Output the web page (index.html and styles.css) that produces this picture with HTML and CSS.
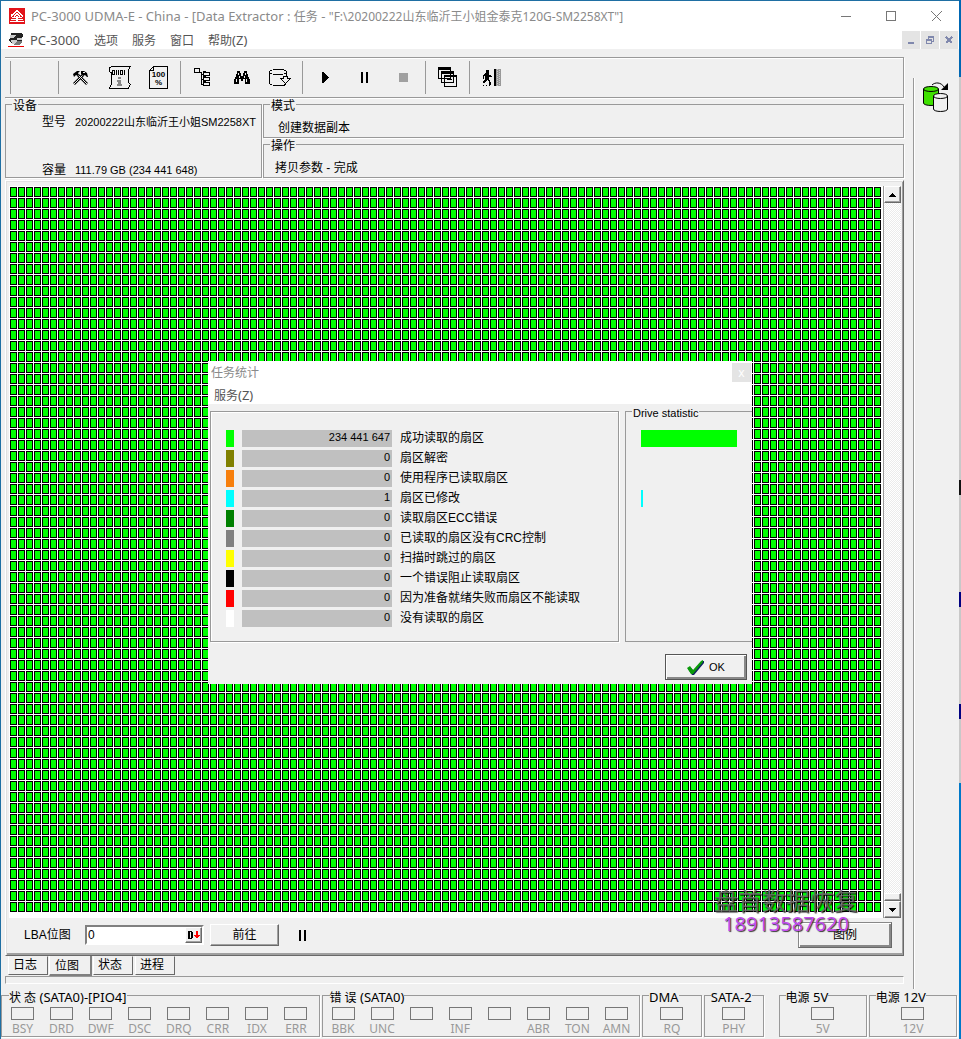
FILE: index.html
```html
<!DOCTYPE html>
<html lang="zh-CN">
<head>
    <meta charset="UTF-8">
    <meta name="viewport" content="width=device-width, initial-scale=1.0">
    <title>PC-3000 UDMA-E</title>
    <link rel="stylesheet" href="styles.css">
</head>
<body>
    <div class="window">
        <header class="titlebar">
            <svg class="app-icon" width="16" height="16" viewBox="0 0 16 16"><path fill="#e2141b" d="M0 0h16v16H0z"/><path d="M2 8l6-5.500 6 5.500M5 8.500l3-3 3 3" fill="none" stroke="#fff" stroke-width="1.500"/><path fill="#fff" d="M3 9h10v1H3zM2 11h12v1H2zM1 13h14v1H1zM7 8h2v6H7z"/></svg>
            <h1>PC-3000 UDMA-E - China - [Data Extractor : <span class="zh">任务</span> - <span class="zh">"F:\20200222山东临沂王小姐金泰克120G-SM2258XT"]</span></h1>
            <div class="window-buttons">
                <button aria-label="最小化"><svg width="11" height="11"><path d="M0 5.500h10" stroke="#777"/></svg></button>
                <button aria-label="最大化"><svg width="11" height="11"><path d="M.5.500h9v9h-9z" fill="none" stroke="#777"/></svg></button>
                <button aria-label="关闭"><svg width="11" height="11"><path d="M.5.500l10 10M10.500.500l-10 10" stroke="#777"/></svg></button>
            </div>
        </header>
        <nav class="menubar">
            <svg class="app-icon" width="16" height="16" viewBox="0 0 16 16"><path fill="#222" d="M3 1h10l2 2-1 5-3 3H3L1 9l1-3z"/><path fill="#ccc" d="M2 3h6L6 6H2zM9 6h5v2H9zM3 8h5l3 2-2 2H4z"/><path fill="#777" d="M9 9h5v2l-3 2H6z"/><path fill="#e00" d="M0 14h16v1H0z"/></svg>
            <a href="#">PC-3000</a>
            <a href="#"><span class="zh">选项</span></a>
            <a href="#"><span class="zh">服务</span></a>
            <a href="#"><span class="zh">窗口</span></a>
            <a href="#"><span class="zh">帮助</span>(Z)</a>
            <div class="mdi-buttons">
                <button aria-label="最小化子窗口"><svg width="8" height="8"><path fill="#8088ad" d="M1 6h6v2H1z"/></svg></button>
                <button aria-label="还原子窗口"><svg width="8" height="8"><path fill="#8088ad" fill-rule="evenodd" d="M2 0h6v6H6V5h1V2H3v1H2zM0 3h6v5H0zm1 2v2h4V5z"/></svg></button>
                <button aria-label="关闭子窗口"><svg width="8" height="8"><path d="M1 1l6 6M7 1L1 7" stroke="#8088ad" stroke-width="2"/></svg></button>
            </div>
        </nav>

        <div class="workspace">
            <main class="task">
                <div class="toolbar">
                    <div class="tool-group tool-group-empty"></div>
                    <div class="tool-group">
                        <button aria-label="工具"><svg class="smooth" width="17" height="17" viewBox="0 0 17 17"><path d="M2 15l9-9M15 15L6 6" fill="none" stroke="#000" stroke-width="2.600"/><path d="M2 15l9-9M15 15L6 6" stroke="#f0f0f0"/><path d="M1 5l4-3h3L6 4l1 2-1 1-2-1-2 2zM9 2h3l3 2 1 4h-1l-2-2-2 1-2-2z"/><path fill="#f0f0f0" d="M11 3h2v1h-2z"/></svg></button>
                        <button aria-label="信息"><svg width="24" height="23" viewBox="0 0 24 23"><path d="M4 .5h18.500l-2 3v13l2 2-2 3.500H1.500l2-4V7L1 5V2z" fill="#f0f0f0" stroke="#000"/><g fill="none" stroke="#000"><path d="M4.500 4.500h2v4h-2zM8.500 4v5M10.500 4v5M12.500 4.500h2v4h-2zM16.500 4v5"/></g><path fill="#888" d="M10 11h3v2h-3zM9 14h4v4h1v2H9v-2h1v-2H9z"/></svg></button>
                        <button aria-label="进度"><svg width="20" height="23" viewBox="0 0 20 23"><path d="M4.500.500h14v22H.5v-18zv4h-4" fill="#f0f0f0" stroke="#000"/><text x="9.500" y="11" text-anchor="middle" class="icon-text">100</text><text x="9.500" y="19" text-anchor="middle" class="icon-text">%</text></svg></button>
                    </div>
                    <div class="tool-group">
                        <button aria-label="目录树"><svg width="17" height="19" viewBox="0 0 17 19"><path d="M.5.500h5v4h-5zM9.500 4.500h6v3h-6zM9.500 9.500h6v3h-6zM9.500 14.500h6v3h-6zM4 4.500h3V16h2M7 6h2M7 11h2" fill="none" stroke="#000"/><path d="M9 3h3v1H9zM9 8h3v1H9zM9 13h3v1H9zM15 4h1v4h-1z"/></svg></button>
                        <button aria-label="查找"><svg width="16" height="14" viewBox="0 0 16 14"><path d="M3 0h3v2h1v3h2V2h1V0h3v3h1v3h1v2h1v5h-5V8H9v2H7V8H5v5H0V8h1V6h1V3h1z"/><path fill="#f0f0f0" d="M4 2h1v2H4zM11 2h1v2h-1zM2 8h1v3H2zM12 8h1v3h-1zM5 5h1v2H5zM10 5h1v2h-1z"/></svg></button>
                        <button aria-label="磁盘"><svg width="23" height="18" viewBox="0 0 23 18"><path d="M.5 3c0-3.300 17-3.300 17 0s-17 3.300-17 0v11c0 3 14 3.500 16 1.500M17.500 3v6" fill="none" stroke="#000"/><path d="M11.500 9.500h3v-2h4v2h3l-5 5z" fill="#f0f0f0" stroke="#000"/></svg></button>
                    </div>
                    <div class="tool-group playback">
                        <button aria-label="开始"><svg width="7" height="11"><path d="M0 0h1l6 5v1l-6 5H0z"/></svg></button>
                        <button aria-label="暂停"><svg width="8" height="11"><path d="M0 0h2v11H0zM5 0h2v11H5z"/></svg></button>
                        <button aria-label="停止"><svg width="9" height="9"><path fill="#a0a0a0" d="M0 0h9v9H0z"/></svg></button>
                    </div>
                    <div class="tool-group">
                        <button aria-label="窗口列表"><svg width="20" height="21" viewBox="0 0 20 21"><path d="M.5.500h12v11H.5zM3.500 4.500h12v11h-12zM6.500 8.500h12v11h-12z" fill="#f0f0f0" stroke="#000"/><path d="M1 1h12v2H1zM4 5h12v2H4zM7 9h12v1H7zM9 12h5v1H9zM9 15h7v1H9z"/></svg></button>
                    </div>
                    <div class="tool-group">
                        <button aria-label="退出"><svg width="19" height="18" viewBox="0 0 19 18"><path d="M4 1h3v3H4zM3 4h4v2h2v1h1v1H7v3h1v2h1v3H7v-3l-2-2-2 3H1v-1l2-3V7H2v3H1V6zM12 0h2v17h-2zM1 16h1v1H1zM4 16h1v1H4zM7 16h1v1H7z"/><path fill="#999" d="M14 0h5v17h-5z"/><path d="M15.500 0v17M17.500 1v16" stroke="#ccc" stroke-dasharray="1 1"/></svg></button>
                    </div>
                </div>

                <div class="info">
                    <fieldset class="device">
                        <legend>设备</legend>
                        <dl>
                            <dt>型号</dt>
                            <dd>20200222山东临沂王小姐SM2258XT</dd>
                            <dt>容量</dt>
                            <dd>111.79 GB (234 441 648)</dd>
                        </dl>
                    </fieldset>
                    <div class="modes">
                        <fieldset>
                            <legend>模式</legend>
                            <p class="mode-text">创建数据副本</p>
                        </fieldset>
                        <fieldset>
                            <legend>操作</legend>
                            <p>拷贝参数 - 完成</p>
                        </fieldset>
                    </div>
                </div>

                <section class="panel">
                    <div class="map">
                        <div class="sectors"></div>
                        <div class="scrollbar">
                            <button class="raised" aria-label="向上"><svg width="7" height="4"><path d="M3 0h1v1h1v1h1v1h1v1H0V3h1V2h1V1h1z"/></svg></button>
                            <div class="track"></div>
                            <div class="thumb raised"></div>
                            <button class="raised" aria-label="向下"><svg width="7" height="4"><path d="M0 0h7v1H6v1H5v1H4v1H3V3H2V2H1V1H0z"/></svg></button>
                        </div>
                    </div>
                    <div class="lba-bar">
                        <label for="lba">LBA位图</label>
                        <div class="lba-box">
                            <input type="text" id="lba" value="0">
                            <button class="raised" aria-label="十进制"><svg width="12" height="8"><path fill-rule="evenodd" d="M0 0h4v1h1v6H4v1H0zm2 1v6h1V1z"/><path fill="#f00" d="M8 0h2v4h2v1h-1v1h-1v1H8V6H7V5H6V4h2z"/></svg></button>
                        </div>
                        <button class="raised go">前往</button>
                        <button class="pause" aria-label="暂停位图"><svg width="8" height="11"><path d="M0 0h2v11H0zM5 0h2v11H5z"/></svg></button>
                        <button class="raised legend-button">图例</button>
                    </div>
                </section>

                <div class="tabs">
                    <button>日志</button>
                    <button class="active">位图</button>
                    <button>状态</button>
                    <button>进程</button>
                </div>
                <div class="progress-line"></div>
            </main>
            <aside class="sidebar">
                <button aria-label="数据副本"><svg class="smooth" width="26" height="31" viewBox="0 0 26 31"><path d="M.5 7c0-3.300 15-3.300 15 0v14c0 3.300-15 3.300-15 0z" fill="#3fe000" stroke="#000"/><path d="M.5 7c0 3.300 15 3.300 15 0" fill="none" stroke="#000"/><path d="M10.500 14c0-3.300 14-3.300 14 0v13c0 3.300-14 3.300-14 0z" fill="#f0f0f0" stroke="#000"/><path d="M10.500 14c0 3.300 14 3.300 14 0M9 3c3-3 9-3 12 2" fill="none" stroke="#000"/><path d="M25 1v7h-7z"/></svg></button>
            </aside>
        </div>

        <footer class="status">
            <fieldset class="wide">
                <legend><span class="zh">状 态</span> (SATA0)-[PIO4]</legend>
                <span class="led">BSY</span>
                <span class="led">DRD</span>
                <span class="led">DWF</span>
                <span class="led">DSC</span>
                <span class="led">DRQ</span>
                <span class="led">CRR</span>
                <span class="led">IDX</span>
                <span class="led">ERR</span>
            </fieldset>
            <fieldset class="wide">
                <legend><span class="zh">错 误</span> (SATA0)</legend>
                <span class="led">BBK</span>
                <span class="led">UNC</span>
                <span class="led"></span>
                <span class="led">INF</span>
                <span class="led"></span>
                <span class="led">ABR</span>
                <span class="led">TON</span>
                <span class="led">AMN</span>
            </fieldset>
            <fieldset class="small">
                <legend>DMA</legend>
                <span class="led">RQ</span>
            </fieldset>
            <fieldset class="small">
                <legend>SATA-2</legend>
                <span class="led">PHY</span>
            </fieldset>
            <fieldset class="power power-first">
                <legend><span class="zh">电源</span> 5V</legend>
                <span class="led">5V</span>
            </fieldset>
            <fieldset class="power">
                <legend><span class="zh">电源</span> 12V</legend>
                <span class="led">12V</span>
            </fieldset>
        </footer>

        <div class="dialog" role="dialog" aria-labelledby="dialog-title">
            <div class="dialog-title">
                <h2 id="dialog-title">任务统计</h2>
                <button aria-label="关闭统计">x</button>
            </div>
            <nav class="dialog-menu"><a href="#"><span class="zh">服务</span>(Z)</a></nav>
            <div class="dialog-body">
                <div class="stats">
                    <table>
                        <tr><td><i class="swatch read"></i></td><td><b>234 441 647</b></td><th scope="row">成功读取的扇区</th></tr>
                        <tr><td><i class="swatch decoded"></i></td><td><b>0</b></td><th scope="row">扇区解密</th></tr>
                        <tr><td><i class="swatch program"></i></td><td><b>0</b></td><th scope="row">使用程序已读取扇区</th></tr>
                        <tr><td><i class="swatch changed"></i></td><td><b>1</b></td><th scope="row">扇区已修改</th></tr>
                        <tr><td><i class="swatch ecc"></i></td><td><b>0</b></td><th scope="row">读取扇区ECC错误</th></tr>
                        <tr><td><i class="swatch crc"></i></td><td><b>0</b></td><th scope="row">已读取的扇区没有CRC控制</th></tr>
                        <tr><td><i class="swatch skipped"></i></td><td><b>0</b></td><th scope="row">扫描时跳过的扇区</th></tr>
                        <tr><td><i class="swatch blocked"></i></td><td><b>0</b></td><th scope="row">一个错误阻止读取扇区</th></tr>
                        <tr><td><i class="swatch not-ready"></i></td><td><b>0</b></td><th scope="row">因为准备就绪失败而扇区不能读取</th></tr>
                        <tr><td><i class="swatch unread"></i></td><td><b>0</b></td><th scope="row">没有读取的扇区</th></tr>
                    </table>
                </div>
                <fieldset class="drive">
                    <legend>Drive statistic</legend>
                    <div class="bars">
                        <span class="bar read" style="width: 100%"></span>
                        <span></span>
                        <span></span>
                        <span class="bar changed" style="width: 2%"></span>
                    </div>
                </fieldset>
            </div>
            <div class="dialog-footer">
                <button class="raised ok">
                    <svg class="smooth" width="17" height="15" viewBox="0 0 17 15"><path fill="#102060" d="M1 9l3-1 3 3 8-10h2v2L7 15H5z"/><path fill="#0a9a0a" d="M0 8l3-2 3 4 8-9 2-1v2L6 14H4z"/></svg>
                    OK
                </button>
            </div>
        </div>

        <div class="watermark">
            <span>盘首数据恢复</span>
            <strong>18913587620</strong>
        </div>
    </div>
</body>
</html>
```
FILE: styles.css
```css
* {
    box-sizing: border-box;
}
body {
    margin: 0;
    padding-right: 2px;
    height: 100vh;
    min-height: 760px;
    font-family: "Liberation Sans", "Noto Sans CJK SC", sans-serif;
    font-size: 12px;
    line-height: 13px;
    color: #000;
    background: linear-gradient(#0067b3 77px, #c8c8c8 77px 480px, #111 480px 495px, #c8c8c8 495px 592px, #000080 592px 607px, #c8c8c8 607px 704px, #000080 704px 719px, #c8c8c8 719px 783px, #0078c8 783px);
}
h1, h2, p, dl, dd {
    margin: 0;
    font-size: 12px;
    font-weight: normal;
}
button {
    display: flex;
    align-items: center;
    justify-content: center;
    padding: 0;
    border: none;
    background: none;
    font: inherit;
    color: inherit;
}
svg {
    display: block;
    shape-rendering: crispEdges;
}
a {
    color: inherit;
    text-decoration: none;
}
fieldset {
    margin: 0;
    padding: 0;
    min-width: 0;
    border: 1px solid #999;
    box-shadow: 1px 1px #fff;
}
legend {
    padding: 0 1px;
    margin-left: 6px;
    height: 13px;
    line-height: 17px;
    white-space: nowrap;
}
.zh {
    font-size: 12px;
}
.smooth {
    shape-rendering: auto;
}
.icon-text {
    font-size: 8px;
    font-weight: bold;
}
.raised {
    background: #f0f0f0;
    border: 1px solid;
    border-color: #fff #696969 #696969 #fff;
    box-shadow: inset -1px -1px #a0a0a0;
}
.window {
    position: relative;
    display: flex;
    flex-direction: column;
    height: 100%;
    border: 1px solid #1f6fa3;
    border-width: 1px 0 0 1px;
    background: #f0f0f0;
}

/* title and menu */
.titlebar, .menubar {
    display: flex;
    align-items: center;
    background: #fff;
    font-family: "Noto Sans", "Noto Sans CJK SC", sans-serif;
    font-size: 13px;
    white-space: nowrap;
}
.titlebar {
    height: 30px;
    padding-left: 8px;
    color: #8a8a8a;
}
.titlebar h1 {
    font-size: 13px;
}
.app-icon {
    margin-right: 6px;
}
.window-buttons {
    display: flex;
    margin-left: auto;
}
.window-buttons button {
    width: 45px;
    height: 28px;
}
.menubar {
    height: 18px;
    padding-left: 7px;
    color: #555;
}
.menubar a {
    margin-right: 14px;
}
.mdi-buttons {
    display: flex;
    gap: 1px;
    margin: 0 1px 0 auto;
}
.mdi-buttons button {
    width: 18px;
    height: 18px;
    background: #e4e4e4;
}
.workspace {
    flex: 1;
    display: flex;
    min-height: 0;
}
.task {
    flex: 1;
    min-width: 0;
    display: flex;
    flex-direction: column;
    padding: 8px 9px 0 4px;
}

/* toolbar */
.toolbar {
    display: flex;
    height: 41px;
    padding: 3px 5px;
    border: 1px solid #999;
    border-left: none;
    box-shadow: inset 0 1px #fff, 1px 1px #fff;
}
.tool-group {
    display: flex;
    padding: 0 2px;
    border-left: 1px solid #999;
}
.tool-group-empty {
    width: 48px;
}
.tool-group button {
    width: 39px;
}
.playback {
    padding-left: 3px;
}

/* device info */
.info {
    display: flex;
    gap: 1px;
}
.device {
    width: 257px;
}
.device dl {
    display: grid;
    grid-template-columns: 27px 1fr;
    gap: 35px 6px;
    padding: 5px 0 0 36px;
    white-space: nowrap;
}
.device dd {
    font-size: 11px;
}
.modes {
    flex: 1;
    min-width: 0;
}
.modes fieldset {
    height: 40px;
}
.modes p {
    padding: 11px 11px 0;
}
.modes .mode-text {
    padding-left: 14px;
}

/* sector map */
.panel {
    flex: 1;
    min-height: 0;
    display: flex;
    flex-direction: column;
    margin-top: 2px;
    padding: 5px 2px 3px 3px;
    border: 1px solid;
    border-color: #fff #696969 #696969 #fff;
    box-shadow: inset 1px 1px #e0e0e0, inset -1px -2px #a0a0a0;
}
.map {
    flex: 1;
    min-height: 0;
    display: flex;
    background: #fff;
}
.sectors {
    flex: 1;
    margin: 1px 1px 5px;
    background:
        linear-gradient(to right, transparent 7px, #fff 7px),
        linear-gradient(transparent 10px, #fff 10px),
        linear-gradient(to right, #000 1px, transparent 1px 6px, #000 6px),
        linear-gradient(#000 1px, transparent 1px 9px, #000 9px),
        #0f0;
    background-size: 8px 11px;
}
.scrollbar {
    display: flex;
    flex-direction: column;
    width: 18px;
    border-left: 1px solid #999;
    background: #f0f0f0;
}
.scrollbar button {
    height: 17px;
}
.track {
    flex: 1;
    background: repeating-conic-gradient(#fff 0 25%, #ebebeb 0 50%) 0 0 / 2px 2px;
}
.thumb {
    height: 8px;
}
.lba-bar {
    display: flex;
    align-items: center;
    height: 34px;
    padding: 0 9px 0 15px;
}
.lba-bar label {
    width: 61px;
}
.lba-box {
    display: flex;
    width: 119px;
    height: 20px;
    border: 2px solid;
    border-color: #808080 #fff #fff #808080;
    background: #fff;
}
.lba-box input {
    flex: 1;
    min-width: 0;
    padding: 0 1px;
    border: none;
    outline: none;
    font: inherit;
    background: none;
}
.lba-box button {
    width: 17px;
}
.go {
    width: 69px;
    height: 22px;
    margin-left: 6px;
}
.pause {
    width: 34px;
    height: 22px;
    margin-left: 7px;
}
.legend-button {
    width: 94px;
    height: 26px;
    margin-left: auto;
    border-color: #888 #696969 #696969 #888;
    box-shadow: inset 1px 1px #fff, inset -2px -2px #888;
}

/* tabs */
.tabs {
    display: flex;
    align-items: flex-start;
    gap: 2px;
    height: 20px;
    padding-left: 3px;
}
.tabs button {
    justify-content: flex-start;
    width: 40px;
    height: 19px;
    padding-left: 4px;
    border: 1px solid;
    border-color: transparent #696969 #696969 #fff;
    background: #f0f0f0;
}
.tabs .active {
    width: 43px;
    height: 20px;
    padding: 2px 0 0 5px;
    margin: 0 -1px;
    border-width: 0 2px 2px 1px;
    border-color: #999 #808080 #808080 #fff;
}
.progress-line {
    height: 8px;
    margin-bottom: 5px;
    border: 1px solid #999;
    border-color: #999 #fff #fff #999;
}

/* right side */
.sidebar {
    width: 46px;
    margin-top: 29px;
    padding: 4px 9px;
    border-left: 1px solid #999;
    box-shadow: inset 1px 0 #fff;
}

/* status lights */
.status {
    display: flex;
    gap: 2px;
    padding: 0 2px 2px 0;
    font-family: "Noto Sans", "Noto Sans CJK SC", sans-serif;
}
.status fieldset {
    display: flex;
    flex: 59 1 0;
    height: 48px;
    padding: 5px 3px 0 1px;
}
.status legend {
    padding: 0;
    font-size: 13px;
}
.status .wide {
    flex-grow: 319;
}
.status .power {
    flex-grow: 88;
}
.status .power-first {
    margin-left: 13px;
}
.status .small, .status .power {
    padding: 5px 0 0;
}
.led {
    flex: 1;
    display: flex;
    flex-direction: column;
    align-items: center;
    gap: 2px;
    color: #999;
}
.led::before {
    content: "";
    width: 21px;
    height: 11px;
    border: 1px solid #777;
}

/* statistics dialog */
.dialog {
    position: absolute;
    top: 360px;
    left: 50%;
    width: 544px;
    transform: translateX(-50%);
    background: #f0f0f0;
}
.dialog-title, .dialog-menu {
    display: flex;
    justify-content: space-between;
    background: #fff;
    font-family: "Noto Sans", "Noto Sans CJK SC", sans-serif;
}
.dialog-title {
    height: 23px;
    padding: 2px 1px 0 3px;
    line-height: 20px;
    color: #8a8a8a;
}
.dialog-title button {
    width: 19px;
    height: 19px;
    background: #e4e4e4;
    color: #fff;
}
.dialog-menu {
    height: 20px;
    padding: 5px 6px;
    font-size: 13px;
    color: #555;
}
.dialog-body {
    display: flex;
    gap: 6px;
    padding: 1px 0 0 2px;
}
.stats {
    width: 409px;
    height: 231px;
    margin-top: 6px;
    padding: 18px 15px;
    border: 1px solid #999;
    box-shadow: 1px 1px #fff, inset 1px 1px #fff;
}
.stats table {
    border-collapse: collapse;
}
.stats td, .stats th {
    height: 20px;
    padding: 0;
    text-align: left;
    vertical-align: top;
    font-weight: normal;
    line-height: 15px;
    white-space: nowrap;
}
.stats th {
    line-height: 17px;
}
.swatch {
    display: block;
    width: 8px;
    height: 17px;
    margin-right: 8px;
}
.stats b {
    display: block;
    width: 150px;
    height: 17px;
    margin-right: 8px;
    padding-right: 2px;
    background: #c0c0c0;
    font-size: 11px;
    font-weight: normal;
    text-align: right;
}
.read { background: #0f0; }
.decoded { background: #808000; }
.program { background: #f77f0c; }
.changed { background: #0ff; }
.ecc { background: #008000; }
.crc { background: #808080; }
.skipped { background: #ff0; }
.blocked { background: #000; }
.not-ready { background: #f00; }
.unread { background: #fff; }
.drive {
    flex: 1;
    border-right: none;
    box-shadow: none;
    font-size: 11px;
}
.bars {
    display: grid;
    grid-auto-rows: 17px;
    gap: 3px;
    padding: 12px 15px;
}
.dialog-footer {
    display: flex;
    justify-content: flex-end;
    padding: 12px 5px 4px;
}
.ok {
    gap: 5px;
    width: 82px;
    height: 26px;
    border: 1px solid #555;
    box-shadow: inset 1px 1px #fff, inset -2px -2px #888;
    font-size: 11px;
}

.watermark {
    position: absolute;
    right: 101px;
    bottom: 104px;
    display: flex;
    flex-direction: column;
    align-items: center;
    font-family: "Noto Sans", "Noto Sans CJK SC", sans-serif;
    pointer-events: none;
}
.watermark span {
    font-size: 24px;
    line-height: 24px;
    color: rgba(110, 110, 110, 0.85);
    text-shadow: 1px 1px 1px rgba(0, 0, 0, 0.8);
}
.watermark strong {
    font-size: 20px;
    line-height: 22px;
    font-weight: normal;
    color: #c44df0;
    text-shadow: 1px 1px 1px #333;
}
```
